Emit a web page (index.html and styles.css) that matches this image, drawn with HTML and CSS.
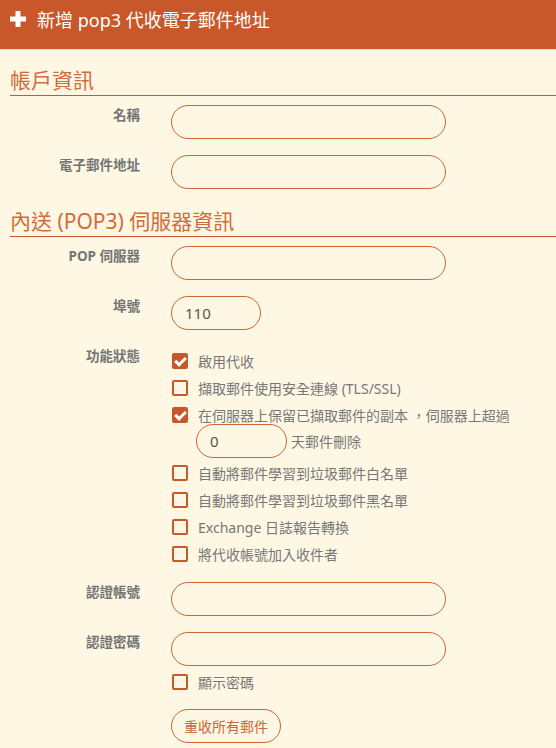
FILE: index.html
```html
<!DOCTYPE html>
<html lang="zh-Hant">
<head>
<meta charset="utf-8">
<title>新增 pop3 代收電子郵件地址</title>
<link rel="stylesheet" href="styles.css">
</head>
<body>
<header class="topbar">
  <svg class="plus" width="16" height="16" viewBox="0 0 16 16" aria-hidden="true"><path d="M5.5 0h5v5.5H16v5h-5.5V16h-5v-5.5H0v-5h5.5z" fill="#fff"/></svg>
  <span class="title">新增 pop3 代收電子郵件地址</span>
</header>

<main class="content">
  <h2 class="section-title">帳戶資訊</h2>
  <div class="row">
    <label class="lbl">名稱</label>
    <div class="field"><input class="input wide" type="text"></div>
  </div>
  <div class="row">
    <label class="lbl">電子郵件地址</label>
    <div class="field"><input class="input wide" type="text"></div>
  </div>

  <h2 class="section-title second">內送 (POP3) 伺服器資訊</h2>
  <div class="row">
    <label class="lbl">POP 伺服器</label>
    <div class="field"><input class="input wide" type="text"></div>
  </div>
  <div class="row">
    <label class="lbl">埠號</label>
    <div class="field"><input class="input port" type="text" value="110"></div>
  </div>
  <div class="row options-row">
    <label class="lbl">功能狀態</label>
    <div class="field options">
      <div class="opt"><span class="cb checked"></span><span>啟用代收</span></div>
      <div class="opt"><span class="cb"></span><span>擷取郵件使用安全連線 (TLS/SSL)</span></div>
      <div class="opt multi">
        <div class="opt-line"><span class="cb checked"></span><span>在伺服器上保留已擷取郵件的副本 ，伺服器上超過</span></div>
        <div class="days"><input class="input small" type="text" value="0"><span>天郵件刪除</span></div>
      </div>
      <div class="opt"><span class="cb"></span><span>自動將郵件學習到垃圾郵件白名單</span></div>
      <div class="opt"><span class="cb"></span><span>自動將郵件學習到垃圾郵件黑名單</span></div>
      <div class="opt"><span class="cb"></span><span>Exchange 日誌報告轉換</span></div>
      <div class="opt"><span class="cb"></span><span>將代收帳號加入收件者</span></div>
    </div>
  </div>
  <div class="row">
    <label class="lbl">認證帳號</label>
    <div class="field"><input class="input wide" type="text"></div>
  </div>
  <div class="row tight">
    <label class="lbl">認證密碼</label>
    <div class="field">
      <input class="input wide" type="password">
      <div class="opt show-pw"><span class="cb"></span><span>顯示密碼</span></div>
      <button class="btn" type="button">重收所有郵件</button>
    </div>
  </div>
</main>
</body>
</html>
```

FILE: styles.css
```css
* { box-sizing: border-box; }

html, body {
  margin: 0;
  padding: 0;
  background: #fdf7e4;
}

body {
  font-family: "Noto Sans", "Noto Sans CJK TC", sans-serif;
  color: #666;
  width: 556px;
  overflow: hidden;
}

.topbar {
  height: 50px;
  background: #c8582a;
  border-bottom: 1px solid #f0d9bf;
  display: flex;
  align-items: flex-start;
  padding: 11px 10px 0 10px;
  gap: 11px;
}

.plus { flex: none; }

.title {
  color: #fff;
  font-size: 18px;
  line-height: 20px;
  margin-top: -1px;
}

.content {
  padding: 16px 0 0 10px;
}

.section-title {
  margin: 0 0 9px 0;
  font-weight: normal;
  font-size: 21px;
  line-height: 28px;
  height: 30px;
  color: #d26c3a;
  border-bottom: 1px solid #c8582a;
}

.section-title.second {
  margin-top: 18px;
}

.row {
  display: grid;
  grid-template-columns: 130px 1fr;
  column-gap: 31px;
  margin-bottom: 16px;
}

.lbl {
  text-align: right;
  font-size: 13.5px;
  font-weight: bold;
  color: #747474;
  line-height: 20px;
}

.field {
  display: flex;
  flex-direction: column;
  align-items: flex-start;
}

.input {
  height: 34px;
  border: 1px solid #cd6534;
  border-radius: 17px;
  background: #fdf7e4;
  padding: 0 13px;
  font-family: "Noto Sans", "Noto Sans CJK TC", sans-serif;
  font-size: 15px;
  color: #555;
  outline: none;
}

.input.wide { width: 275px; }
.input.port { width: 90px; }
.input.small { width: 91px; }

.options { padding-top: 1px; }
.options-row { margin-bottom: 15px; }

.opt {
  display: flex;
  align-items: center;
  height: 27px;
  font-size: 14px;
  color: #777;
  gap: 10px;
  white-space: nowrap;
}

.opt.multi {
  flex-direction: column;
  align-items: flex-start;
  height: auto;
  gap: 0;
  margin-bottom: 1px;
}

.opt-line {
  display: flex;
  align-items: center;
  gap: 10px;
  height: 27px;
  margin-bottom: -4px;
}

.days {
  display: flex;
  align-items: center;
  gap: 4px;
  margin-left: 25px;
}

.cb {
  width: 16px;
  height: 16px;
  border: 2px solid #c8582a;
  border-radius: 2px;
  flex: none;
  position: relative;
  margin-left: 1px;
}

.cb.checked {
  background: #c8582a;
}

.cb.checked::after {
  content: "";
  position: absolute;
  left: 3px;
  top: 0px;
  width: 4px;
  height: 8px;
  border: solid #fff;
  border-width: 0 3px 3px 0;
  transform: rotate(45deg);
}

.row.tight { margin-bottom: 0; }

.show-pw {
  margin-top: 2px;
}

.btn {
  margin-top: 14px;
  height: 34px;
  width: 110px;
  border: 1px solid #cd6534;
  border-radius: 17px;
  background: #fdf7e4;
  color: #cd6534;
  font-family: "Noto Sans", "Noto Sans CJK TC", sans-serif;
  font-size: 14px;
  padding: 0;
}
```
